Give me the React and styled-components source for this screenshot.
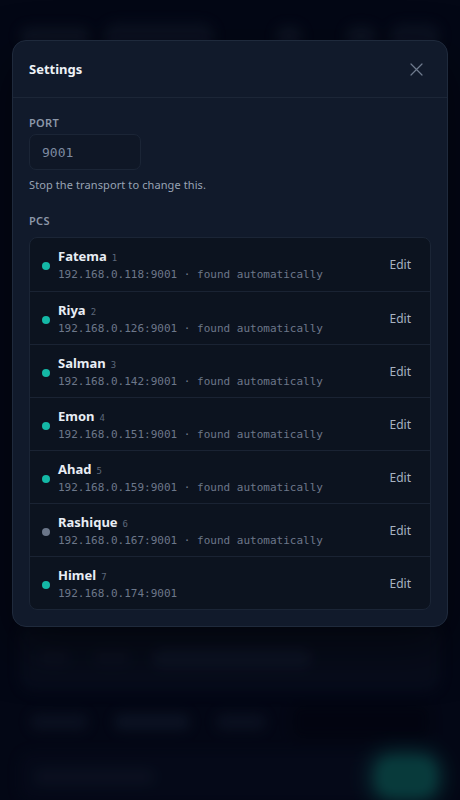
import React from "react";
import styled, { createGlobalStyle } from "styled-components";

const Global = createGlobalStyle`
  html, body { margin: 0; padding: 0; background: #040816; }
  body { font-family: "Noto Sans", "Open Sans", sans-serif; -webkit-font-smoothing: antialiased; }
  * { box-sizing: border-box; }
`;

const Screen = styled.div`
  position: relative;
  width: 460px;
  height: 800px;
  overflow: hidden;
  background: #040816;
`;

/* blurred application behind the dialog */
const BgApp = styled.div`
  height: 100%;
  display: flex;
  flex-direction: column;
  padding: 22px 20px 0;
  gap: 14px;
  filter: blur(6px);
  opacity: 0.9;
`;

const BgTop = styled.div`
  display: flex;
  align-items: center;
  gap: 14px;
  height: 30px;
`;

const Blob = styled.div`
  height: ${(p) => p.$h || 22}px;
  width: ${(p) => p.$w}px;
  border-radius: 999px;
  background: ${(p) => p.$c || "#121a2a"};
  margin-left: ${(p) => p.$ml || 0}px;
  flex: none;
`;

const BgSpacer = styled.div`
  flex: 1;
`;

const BgCard = styled.div`
  margin-top: 560px;
  height: 72px;
  border-radius: 14px;
  background: #0a1020;
  display: flex;
  align-items: center;
  gap: 20px;
  padding: 0 16px;
`;

const BgRow = styled.div`
  display: flex;
  align-items: center;
  gap: 26px;
  height: 36px;
  padding: 0 10px;
`;

const BgDark = styled.div`
  flex: 1;
  height: 34px;
  border-radius: 8px;
  background: #02040f;
`;

const BgBottom = styled.div`
  display: flex;
  align-items: center;
  justify-content: space-between;
  height: 50px;
  padding: 0 4px 0 14px;
  background: #070c1c;
  border-radius: 12px;
`;

const Glow = styled.div`
  width: 60px;
  height: 40px;
  border-radius: 16px;
  background: #0c5a54;
  box-shadow: 0 0 16px 8px rgba(18, 130, 118, 0.45);
`;

const Backdrop = styled.div`
  position: absolute;
  inset: 0;
  background: rgba(3, 6, 20, 0.3);
`;

const Dialog = styled.div`
  position: absolute;
  top: 40px;
  left: 12px;
  width: 436px;
  background: #111a2b;
  border: 1px solid #1f2a3c;
  border-radius: 14px;
  box-shadow: 0 20px 50px rgba(0, 0, 0, 0.5);
  display: flex;
  flex-direction: column;
`;

const Header = styled.div`
  height: 57px;
  display: flex;
  align-items: center;
  justify-content: space-between;
  padding: 0 24px 0 16px;
  border-bottom: 1px solid #1c2637;
`;

const Title = styled.h2`
  margin: 0;
  font-size: 13px;
  font-weight: 700;
  color: #eef2f7;
`;

const CloseBtn = styled.button`
  border: 0;
  background: none;
  padding: 0;
  width: 14px;
  height: 14px;
  display: flex;
  align-items: center;
  justify-content: center;
  color: #6f7b8e;
`;

const Body = styled.div`
  padding: 18px 16px 16px;
  display: flex;
  flex-direction: column;
`;

const Label = styled.div`
  font-size: 11px;
  font-weight: 600;
  letter-spacing: 0.3px;
  color: #8c97a9;
  line-height: 14px;
  margin-top: ${(p) => p.$mt || 0}px;
`;

const PortInput = styled.div`
  margin-top: 4px;
  width: 112px;
  height: 36px;
  border: 1px solid #1b2536;
  background: #0f1726;
  border-radius: 7px;
  display: flex;
  align-items: center;
  padding: 0 12px;
  font-family: "DejaVu Sans Mono", monospace;
  font-size: 13px;
  color: #7d8aa0;
`;

const Help = styled.p`
  margin: 8px 0 0;
  font-size: 11px;
  letter-spacing: 0.1px;
  color: #98a3b4;
  line-height: 14px;
`;

const List = styled.div`
  margin-top: 9px;
  border: 1px solid #1b2536;
  border-radius: 8px;
  background: #0c131f;
  display: flex;
  flex-direction: column;
`;

const Row = styled.div`
  height: 53px;
  display: flex;
  align-items: center;
  padding: 0 19px 0 12px;
  border-top: ${(p) => (p.$first ? "0" : "1px solid #1a2333")};
`;

const Dot = styled.span`
  width: 8px;
  height: 8px;
  border-radius: 50%;
  background: ${(p) => (p.$on ? "#14b8a6" : "#6b7689")};
  flex: none;
  margin-top: 3px;
`;

const Info = styled.div`
  flex: 1;
  margin-left: 8px;
  display: flex;
  flex-direction: column;
  gap: 2px;
`;

const NameLine = styled.div`
  display: flex;
  align-items: baseline;
  gap: 5px;
`;

const Name = styled.span`
  font-size: 13px;
  font-weight: 700;
  color: #e8edf4;
  line-height: 18px;
`;

const Num = styled.span`
  font-family: "DejaVu Sans Mono", monospace;
  font-size: 9px;
  color: #5d687a;
`;

const Addr = styled.span`
  font-family: "DejaVu Sans Mono", monospace;
  font-size: 11px;
  color: #6c778a;
  line-height: 15px;
`;

const Edit = styled.button`
  border: 0;
  background: none;
  padding: 0;
  font-family: inherit;
  font-size: 12px;
  color: #a8b2c1;
`;

const pcs = [
  { name: "Fatema", ip: "192.168.0.118", on: true, auto: true },
  { name: "Riya", ip: "192.168.0.126", on: true, auto: true },
  { name: "Salman", ip: "192.168.0.142", on: true, auto: true },
  { name: "Emon", ip: "192.168.0.151", on: true, auto: true },
  { name: "Ahad", ip: "192.168.0.159", on: true, auto: true },
  { name: "Rashique", ip: "192.168.0.167", on: false, auto: true },
  { name: "Himel", ip: "192.168.0.174", on: true, auto: false },
];

export default function App() {
  return (
    <Screen>
      <Global />
      <BgApp>
        <BgTop>
          <Blob $w={70} $h={18} />
          <Blob $w={110} $h={26} $c="#101728" />
          <BgSpacer />
          <Blob $w={26} $h={20} />
          <Blob $w={30} $h={20} $ml={30} />
          <Blob $w={50} $h={24} $c="#101728" />
        </BgTop>
        <BgCard>
          <Blob $w={36} $h={18} $c="#0f1627" />
          <Blob $w={40} $h={18} $c="#0f1627" />
          <Blob $w={160} $h={20} $c="#141c30" />
        </BgCard>
        <BgRow>
          <Blob $w={58} $h={16} $c="#0f1627" />
          <Blob $w={76} $h={16} $c="#111a2c" />
          <Blob $w={50} $h={16} $c="#0f1627" />
          <BgDark />
        </BgRow>
        <BgBottom>
          <Blob $w={120} $h={16} $c="#0f1627" />
          <Glow />
        </BgBottom>
      </BgApp>
      <Backdrop />
      <Dialog>
        <Header>
          <Title>Settings</Title>
          <CloseBtn aria-label="Close">
            <svg width="13" height="13" viewBox="0 0 13 13" fill="none" stroke="currentColor" strokeWidth="1.2" strokeLinecap="round">
              <path d="M1 1L12 12M12 1L1 12" />
            </svg>
          </CloseBtn>
        </Header>
        <Body>
          <Label>PORT</Label>
          <PortInput>9001</PortInput>
          <Help>Stop the transport to change this.</Help>
          <Label $mt={22}>PCS</Label>
          <List>
            {pcs.map((p, i) => (
              <Row key={p.name} $first={i === 0}>
                <Dot $on={p.on} />
                <Info>
                  <NameLine>
                    <Name>{p.name}</Name>
                    <Num>{i + 1}</Num>
                  </NameLine>
                  <Addr>
                    {p.ip}:9001{p.auto ? " · found automatically" : ""}
                  </Addr>
                </Info>
                <Edit>Edit</Edit>
              </Row>
            ))}
          </List>
        </Body>
      </Dialog>
    </Screen>
  );
}
